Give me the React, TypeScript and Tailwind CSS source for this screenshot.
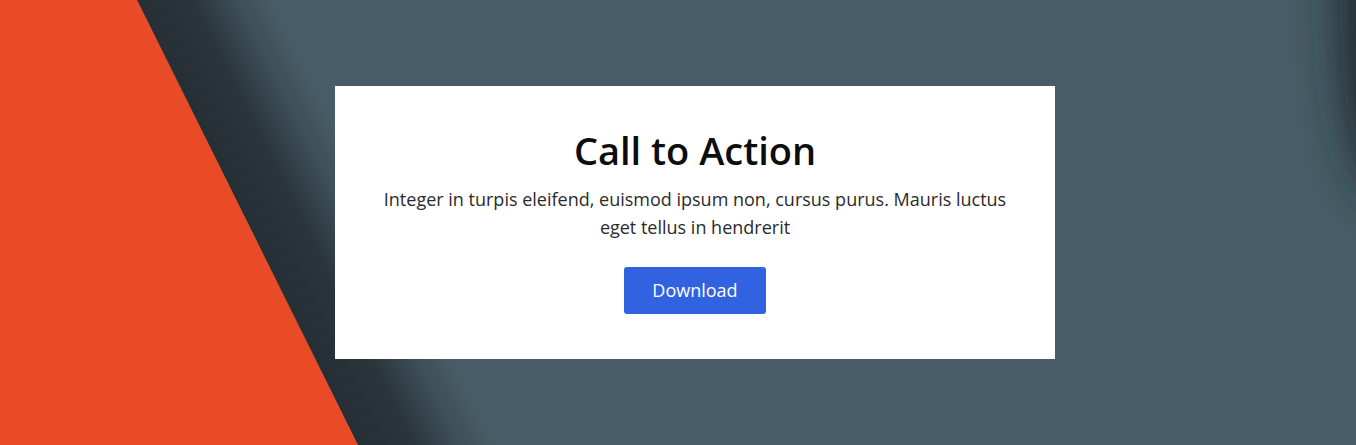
import React from 'react'

const Backdrop: React.FC = () => (
  <svg
    className="absolute inset-0 w-full h-full"
    viewBox="0 0 1356 445"
    preserveAspectRatio="none"
    aria-hidden="true"
  >
    <defs>
      {/* runs perpendicular to the slanted edge of the orange slab */}
      <linearGradient id="edgeShade" gradientUnits="userSpaceOnUse" x1="137" y1="0" x2="245" y2="-54">
        <stop offset="0" stopColor="#252f35" />
        <stop offset="0.4" stopColor="#2a353b" />
        <stop offset="0.75" stopColor="#3e5059" />
        <stop offset="1" stopColor="#475c66" />
      </linearGradient>
      <filter id="cornerShadow" filterUnits="userSpaceOnUse" x="1150" y="-300" width="500" height="800">
        <feGaussianBlur stdDeviation="22" />
      </filter>
    </defs>
    <polygon points="137,0 700,0 700,445 358,445" fill="url(#edgeShade)" />
    {/* soft shadow from something off-canvas, top right */}
    <ellipse cx="1390" cy="10" rx="50" ry="190" fill="#1e272c" opacity="0.95" filter="url(#cornerShadow)" />
    <polygon points="0,0 137,0 358,445 0,445" fill="#e94b26" />
  </svg>
)

export default function App() {
  return (
    <div
      className="relative w-full h-[445px] overflow-hidden bg-[#475c66] flex items-center justify-center pl-[34px]"
      style={{ fontFamily: '"Open Sans", "Noto Sans", Arial, sans-serif' }}
    >
      <Backdrop />

      {/* CTA card */}
      <div className="relative bg-white w-[720px] px-[40px] pt-[40px] pb-[45px] flex flex-col items-center text-center">
        <h1 className="text-[38px] leading-[48px] font-semibold text-[#0d0d0d]">Call to Action</h1>
        <p className="mt-[11px] text-[18px] leading-[28px] text-[#2b2b2b]">
          Integer in turpis eleifend, euismod ipsum non, cursus purus. Mauris luctus eget tellus in hendrerit
        </p>
        <button
          type="button"
          className="mt-[26px] bg-[#3163e0] text-white text-[18px] leading-[27px] px-[28px] py-[10px] rounded-[3px]"
        >
          Download
        </button>
      </div>
    </div>
  )
}
